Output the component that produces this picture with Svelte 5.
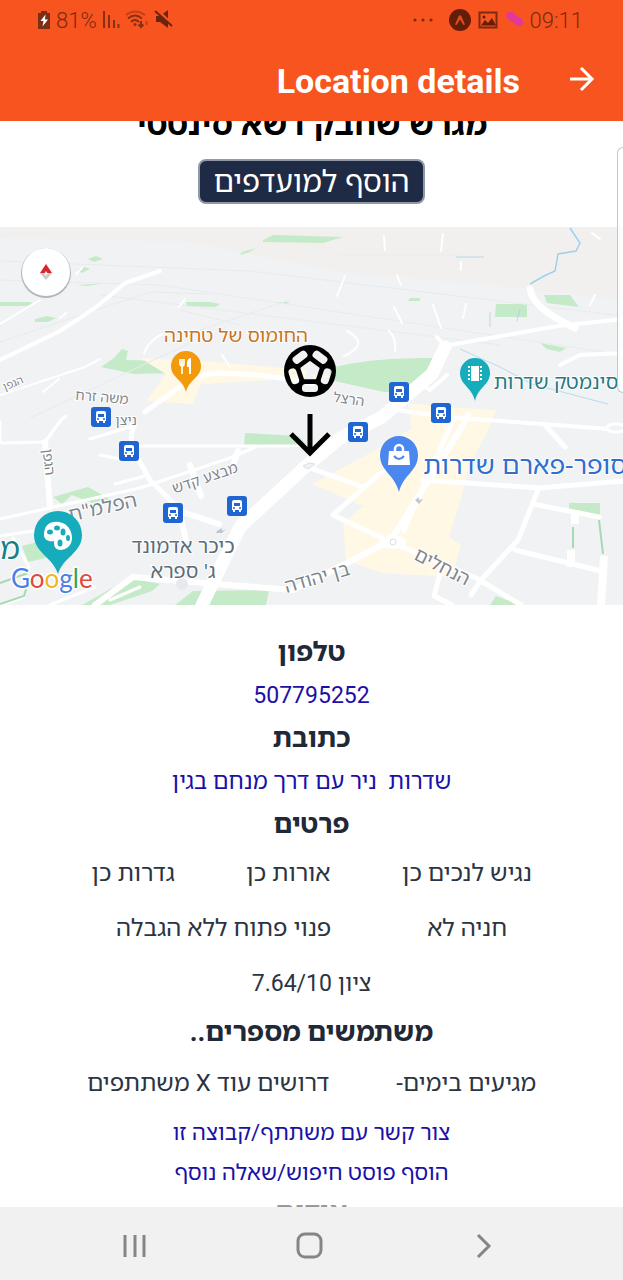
<script>
  const buses = [[399, 392], [441, 413], [101, 417], [129, 451], [358, 432], [173, 513], [237, 506]];
  const details = ['נגיש לנכים כן', 'אורות כן', 'גדרות כן'];
  const more = ['חניה לא', 'פנוי פתוח ללא הגבלה'];
  const posts = ['מגיעים בימים-', 'דרושים עוד X משתתפים'];
  const panels = [36, 108, 180, 252, 324];
</script>

<div class="screen">
  <div class="status">
    <div class="group">
      <svg width="14" height="20" viewBox="0 0 14 20"><path d="M4 1h6v2h3v16H1V3h3z" fill="#7c2f17" /><path d="M8.500 4.500 3.500 11H6.500L5.500 16.500 11 9.500H8z" fill="#fff" /></svg>
      <span>81%</span>
      <svg width="18" height="20" viewBox="0 0 18 20" stroke="#8a2f12" stroke-width="2"><path d="M2 1v17M7 5v13M12 10v8M16.500 14v4" /></svg>
      <svg width="24" height="20" viewBox="0 0 24 20" fill="none" stroke="#8a2f12" stroke-width="2"><path d="M1 5Q10-2 20 5" opacity=".5" /><path d="M3 8.500q7-6 14 0M6 12q4-4 8 0" /><circle cx="10" cy="14.500" r="1.500" fill="#8a2f12" stroke="none" /><path d="M16 11v5M13.500 14.500 16 17l2.500-2.500" /><path d="M21.500 15v-4" opacity=".5" /></svg>
      <svg width="20" height="20" viewBox="0 0 20 20"><path d="M2 6h4l8-6v18l-8-6H2z" fill="#6c2410" /><path d="M3 0l16 15" stroke="#f8541f" stroke-width="3" /><path d="M1 1l17 15" stroke="#6c2410" stroke-width="2" /></svg>
    </div>
    <div class="group">
      <svg class="dots" width="22" height="20" viewBox="0 0 22 20" fill="#7c2a10"><circle cx="3" cy="10" r="1.600" /><circle cx="11" cy="10" r="1.600" /><circle cx="19" cy="10" r="1.600" /></svg>
      <svg width="22" height="22" viewBox="0 0 22 22"><circle cx="11" cy="11" r="11" fill="#641d08" /><path d="M6 15.500 10 6.500h2l4 9-1.500.5L11 10.500 7.500 16z" fill="#e04b1c" /></svg>
      <svg class="photo" width="20" height="18" viewBox="0 0 20 18"><rect x="1.500" y="1.500" width="17" height="15" fill="none" stroke="#7c2a10" stroke-width="2" /><path d="M3 14.500 7 9l3 3 4-5 4 7.500z" fill="#641d08" /><circle cx="6" cy="6" r="1.500" fill="#641d08" /></svg>
      <svg width="20" height="20" viewBox="0 0 20 20"><path d="M2 3q5-3 8 1 2 3 4 3 5 3 4 7-3 4-7 1l-3-3q-4 0-5-3-3-2-1-6" fill="#e2389a" /></svg>
      <span>09:11</span>
    </div>
  </div>

  <header>
    <h1>Location details</h1>
    <button class="back" aria-label="Back">
      <svg width="28" height="28" viewBox="0 0 28 28" fill="none" stroke="#fff" stroke-width="3"><path d="M2 12h22M13 1l11 11-11 11" /></svg>
    </button>
  </header>

  <main dir="rtl">
    <h2>מגרש שחבק דשא סינטטי</h2>
    <button class="favorite">הוסף למועדפים</button>

    <svg class="map" viewBox="0 227 623 378" direction="ltr">
      <defs>
        <mask id="panels">
          <circle r="27" fill="#fff" />
          <path d="M0-9 8.600-2.800 5.300 7.300H-5.300L-8.600-2.800z" fill="#000" stroke="#000" stroke-width="2" stroke-linejoin="round" />
          {#each panels as angle}
            <rect x="-8" y="-21" width="16" height="8" rx="3.500" fill="#000" transform="rotate({angle})" />
          {/each}
        </mask>
      </defs>
      <rect y="227" width="623" height="378" fill="#f0f2f4" />
      <path d="M0 227H623V300L500 286 340 272 270 258 190 242 0 238z" fill="#f2f0ee" />

      <g fill="#c5eac8">
        <path d="M263 240l10-5 70 2-20 6-60-1zM88 259l8-3 7 3-9 3zM77 270l8-3 5 2-8 4zM77 285l28-2-18 3zM0 302h33l-5 4H0zM35 319l12-3 9 2-8 4H35zM186 302h24l10 2-5 3-28-1zM276 302h14l-4 2zM242 252l14-4-6 4-10 3zM410 298h10v3h-12zM496 304h31v13h-32zM544 295h26l9 12-32-4zM540 343l26 5-6 4-13-3zM101 367l13-9 8-9 6 2-2 9 40 1 7 12-39 1z" />
        <path d="M330 368c35-8 60-10 110-10l-12 17-24 16-20 1-54-12zM245 433l53 3 8 8-7 4-55-3zM53 497l35-10 22 12-18 4-20-8-10 9zM22 546l15-4 9 16-18 4zM82 605l48-27 30 6-8 7-42 14zM175 605l18-14 76-1-3 15zM569 503h31v13l-31-5zM490 605l6-9 24 9z" />
      </g>
      <g fill="#fff8e5">
        <path d="M140 358l75 4 92 8-2 8-104 6-8 20-47-3 20-27zM311 374l20 2-15 5z" />
        <path d="M408 403l36 4 52 3-8 20-19 37-8 32-12 38 12 8-9 32-71-4-35-13-3-36 20-18-51-22 60-32 40-24z" />
      </g>
      <g fill="none" stroke="#9ed0ee" stroke-width="1.500">
        <path d="M570 228l10 15-4 8-18 3-3 17-11 5-14 8" />
        <path d="M460 349l40 18 32 17 76 20M456 257h28M517 321l3-12M490 327v-15" stroke-width="1" opacity=".7" />
      </g>
      <g fill="none" stroke="#e8ebed" stroke-width="1">
        <path d="M0 261l250 10 373 45M0 280l160 5 463 70M100 295l400 50M0 342l150-50 60 2M30 418l160-75M200 330l90-30M340 255h120M180 310l60 15" />
      </g>
      <g fill="none" stroke="#fff" stroke-linecap="round" stroke-linejoin="round">
        <path d="M0 360l60-29 35-23 30-25 35-12" stroke-width="4" />
        <path d="M0 324l40-24M0 395l85-28 15-8M144 354q3-12 18-20M43 392l16-13M345 276l-8 20M397 275l4 10M394 307l8 16M433 305l8 23M466 304l-3 14M347 331q15 8 10 16-5 6-13 9M389 331q8 8 6 20M385 250l-1-14M441 251l2-17M461 262v8M590 305l5-10M600 239l-8-6M76 274l6-6M185 299l-6 8M60 318l6-5M222 355l8 12" stroke-width="2" />
        <path d="M450 345l108-19 65-7M560 365l20-10 43-2" stroke-width="4" />
        <path d="M530 289q2 19 45 39" stroke-width="7" />
        <path d="M445 347l-13 27-50 43-43 22-34 28-65 60-38 78" stroke-width="13" />
        <path d="M444 345l-7-8M447 375l-17 15M430 390l-10-6M390 409l57 8 176 13" stroke-width="4" />
        <path d="M145 412q20-15 48-34l20-5q50 0 99 11M135 425q-8 13 1 30l14 25 29 29" stroke-width="5" />
        <path d="M0 443l45-1 16-22 5-4M0 442v-20M0 519l140-31 90-30 28-12M90 439l40-12M100 455l25 5M115 484l30-8M130 446h173M0 536l65-10M13 538l16 29" stroke-width="3" />
        <path d="M45 442l5 65M190 465l11 31M179 510l7 30M179 511l40 13M238 451l-4 12" stroke-width="6" />
        <path d="M95 605l38-28 70 6 90 7 60-30 38-20 72-115 5-10" stroke-width="6" />
        <path d="M393 543l-60-28 45-40 14-9M310 468l53 19M404 530l50-112M423 480l116 8 84-7M538 490l-20 50-37 40-10 15M393 543l83 35 45 27M442 566l-8 30 18 9M533 504l66 13M515 550l90 22M545 425l20 22" stroke-width="5" />
        <path d="M50 605l45-18M24 597l-24 8M110 600l30-13" stroke-width="3" />
      </g>
      <path d="M604 556l-3 49M571 550v17M575 510v14" stroke="#fff" stroke-width="8" />
      <path d="M573 527v21M599 520l4 34M0 583l28-10M0 604l24-8 3-10" stroke="#a8d9b2" stroke-width="2" fill="none" />
      <ellipse cx="393" cy="542" rx="13" ry="7" fill="#fff" /><circle cx="393" cy="542" r="3" fill="#fff" stroke="#ddd" />
      <ellipse cx="616" cy="428" rx="9" ry="4" fill="#f0f2f4" stroke="#fff" stroke-width="3" />
      <path d="M303 466l6-3 6 1-7 5z" fill="#f0f2f4" stroke="#dcdee2" />
      <path d="M217 531l5-3v3l4-2-4 4h-6zM415 500l4-3v3l4-1-4 5z" fill="#c3c5d2" />
      <circle cx="182" cy="584" r="6" fill="#e7e9ec" />

      <g class="street">
        <text x="102" y="402" transform="rotate(5 102 397)" font-size="14">משה זרח</text>
        <text x="126" y="425" font-size="14">ניצן</text>
        <text x="349" y="404" transform="rotate(8 349 399)" font-size="14">הרצל</text>
        <text x="205" y="483" transform="rotate(-19 205 478)" font-size="15">מבצע קדש</text>
        <text x="103" y="514" transform="rotate(-13 103 508)" font-size="20">הפלמ"ח</text>
        <text x="317" y="584" transform="rotate(-16 317 578)" font-size="19">בן יהודה</text>
        <text x="442" y="573" transform="rotate(27 442 567)" font-size="19">הנחלים</text>
        <text x="49" y="467" transform="rotate(84 49 462)" font-size="14">הגפן</text>
        <text x="13" y="387" transform="rotate(-22 13 383)" font-size="11">הגפן</text>
      </g>
      <g class="place">
        <text x="236" y="342" font-size="19" fill="#c77621">החומוס של טחינה</text>
        <text x="556" y="389" font-size="20" fill="#27797f">סינמטק שדרות</text>
        <text x="525" y="474" font-size="26" fill="#2f6fd0">סופר-פארם שדרות</text>
        <text x="10" y="559" font-size="30" fill="#148087">מ</text>
        <text x="183" y="553" font-size="20" fill="#5a6b78">כיכר אדמונד</text>
        <text x="183" y="578" font-size="20" fill="#5a6b78">ג' ספרא</text>
      </g>

      {#each buses as [x, y]}
        <g transform="translate({x} {y})">
          <rect x="-10" y="-10" width="20" height="20" rx="3" fill="#1f66d2" />
          <path d="M-5-4q0-2 2-2h6q2 0 2 2v8h-1v2h-2V4h-4v2h-2V4h-1z" fill="#fff" />
          <path d="M-3-3h6v3h-6z" fill="#1f66d2" /><circle cx="-3" cy="2" r="1" fill="#1f66d2" /><circle cx="3" cy="2" r="1" fill="#1f66d2" />
        </g>
      {/each}

      <g transform="translate(186 366)">
        <path d="M0 26C-3 13-15 12-15 0a15 15 0 0 1 30 0C15 12 3 13 0 26z" fill="#f29a0c" />
        <path d="M-6-7v4q0 3 2 3t2-3v-4M-4-7V8" fill="none" stroke="#fff" stroke-width="1.700" /><path d="M5-8V8H3V1H1v-5q1-4 4-4z" fill="#fff" />
      </g>
      <g transform="translate(475 373)">
        <path d="M0 28C-3 14-15 12-15 0a15 15 0 0 1 30 0C15 12 3 14 0 28z" fill="#16acbb" />
        <path d="M-4-7h8v15h-8z" fill="#fff" /><path d="M-6-7V8M6-7V8" stroke="#fff" stroke-width="2" stroke-dasharray="2 2" />
      </g>
      <g transform="translate(399 455)">
        <path d="M0 37C-4 20-19 16-19 0a19 19 0 0 1 38 0C19 16 4 20 0 37z" fill="#4a87ef" />
        <path d="M-10-4H10l1 14h-22z" fill="#fff" /><path d="M-4-3v-3a4 4 0 0 1 8 0v3" fill="none" stroke="#fff" stroke-width="2.500" /><path d="M-5 1q5 6 10 0" fill="none" stroke="#4a87ef" stroke-width="2" />
      </g>
      <g transform="translate(58 535)">
        <path d="M0 39C-5 22-24 18-24 0a24 24 0 0 1 48 0C24 18 5 22 0 39z" fill="#16acbb" />
        <path d="M-14 0C-14-10-8-14 1-13 9-12 14-5 14 3 14 11 8 15 2 15-4 14-4 10-4 6-9 7-14 5-14 0z" fill="#fff" />
        <g fill="#16acbb"><ellipse cx="-8" cy="-3" rx="3" ry="2.500" /><ellipse cx="-1" cy="-7" rx="3" ry="2.500" /><ellipse cx="5" cy="-3" rx="2.500" ry="3.500" /><ellipse cx="10" cy="3" rx="2" ry="3" /><ellipse cx="2" cy="8" rx="2.500" ry="3.500" /></g>
      </g>

      <text class="google" x="11" y="588" font-size="26"><tspan fill="#4b7fe8">G</tspan><tspan fill="#e1493b">o</tspan><tspan fill="#f2b51d">o</tspan><tspan fill="#4b7fe8">g</tspan><tspan fill="#35a355">l</tspan><tspan fill="#e1493b">e</tspan></text>

      <circle cx="46" cy="273" r="25" fill="#8b8f92" opacity=".6" /><circle cx="46" cy="272" r="24" fill="#fff" />
      <path d="M40 273l6-9 6 9z" fill="#d7262c" /><path d="M40 273h12l-6 7z" fill="#c9c9c9" /><path d="M46 271l-2 3 2 2 2-2z" fill="#eee" />

      <g transform="translate(310 371)"><circle r="26" mask="url(#panels)" /></g>
      <path d="M310 414v38M291 434l19 19 19-19" fill="none" stroke="#000" stroke-width="5" />
    </svg>

    <section>
      <h3>טלפון</h3>
      <a href="tel:507795252">507795252</a>
      <h3>כתובת</h3>
      <a href="#address">שדרות&nbsp; ניר עם דרך מנחם בגין</a>
      <h3>פרטים</h3>
      <div class="row">{#each details as item}<span>{item}</span>{/each}</div>
      <div class="row">{#each more as item}<span>{item}</span>{/each}</div>
      <div class="row score"><span>ציון 7.64/10</span></div>
      <h3>משתמשים מספרים..</h3>
      <div class="row posts">{#each posts as item}<span>{item}</span>{/each}</div>
      <a class="action" href="#contact">צור קשר עם משתתף/קבוצה זו</a>
      <a class="action" href="#post">הוסף פוסט חיפוש/שאלה נוסף</a>
      <h3 class="faded">אודות</h3>
    </section>
  </main>

  <div class="edge"></div>

  <nav>
    <button aria-label="Recent apps"><svg width="28" height="28" viewBox="0 0 28 28" stroke="#858585" stroke-width="3"><path d="M4 3v22M14 3v22M23 3v22" /></svg></button>
    <button aria-label="Home"><svg width="28" height="28" viewBox="0 0 28 28"><rect x="2" y="2" width="23" height="23" rx="7" fill="none" stroke="#858585" stroke-width="3" /></svg></button>
    <button aria-label="Go back"><svg width="28" height="28" viewBox="0 0 28 28" fill="none" stroke="#858585" stroke-width="3"><path d="M8 3l11 11L8 25" /></svg></button>
  </nav>
</div>

<style>
  .screen { position: relative; display: flex; flex-direction: column; height: 100vh; overflow: hidden; background: #fff; color: #1f2937; font-family: Roboto, "Noto Sans Hebrew", "Open Sans", sans-serif; }
  button { border: 0; padding: 0; background: none; font: inherit; }
  svg { display: block; }
  .status, header { background: #f8541f; flex: none; }
  .status { display: flex; justify-content: space-between; align-items: center; height: 40px; padding: 0 40px 0 37px; color: #7c2a10; font-size: 22px; }
  .status span { font-size: 22px; font-weight: 300; }
  .group { display: flex; align-items: center; gap: 5px; }
  .group .dots { margin-right: 10px; }
  .group .photo { margin: 0 2px; }
  header { display: flex; justify-content: flex-end; align-items: center; gap: 48px; height: 81px; padding-right: 27px; }
  h1 { margin: 0; color: #fff; font-size: 34px; line-height: 40px; font-weight: 700; }
  main { display: flex; flex: 1; flex-direction: column; align-items: center; min-height: 0; overflow: hidden; }
  h2 { flex: none; margin: -18px 0 13px; color: #000; font-size: 32px; line-height: 43px; font-weight: 700; }
  .favorite { flex: none; height: 45px; padding: 0 14px; border: 2px solid #9299a6; border-radius: 8px; background: #1f2a44; color: #fff; font-size: 30px; line-height: 40px; }
  .map { flex: none; width: 100%; height: auto; margin-top: 23px; }
  .map text { direction: ltr; text-anchor: middle; font-family: "Noto Sans Hebrew", "Open Sans", sans-serif; stroke: #fff; stroke-width: 2px; paint-order: stroke; }
  .street { fill: #80868b; }
  .map .google { text-anchor: start; font-family: Lato, sans-serif; stroke-width: 3px; }
  section { display: flex; flex: none; flex-direction: column; align-items: center; width: 100%; padding-top: 26px; }
  h3 { margin: 0; font-size: 27px; line-height: 43px; font-weight: 700; }
  a { color: #1a10a8; font-size: 23px; line-height: 43px; text-decoration: none; }
  .action { font-size: 22px; line-height: 40px; }
  .row { display: flex; justify-content: space-evenly; align-self: stretch; padding: 0 20px; font-size: 24px; line-height: 55px; color: #2b3443; }
  .score { font-size: 23px; }
  .posts { line-height: 59px; }
  h3.faded { color: #999; line-height: 38px; }
  .edge { position: absolute; top: 147px; right: 0; width: 6px; height: 246px; border: 1px solid #c8c8c8; border-right: 0; border-radius: 8px 0 0 8px; background: rgba(255, 255, 255, .8); box-sizing: border-box; }
  nav { display: flex; flex: none; justify-content: space-between; align-items: center; height: 73px; padding: 4px 125px 0 121px; box-sizing: border-box; background: #f1f1f1; }
</style>
